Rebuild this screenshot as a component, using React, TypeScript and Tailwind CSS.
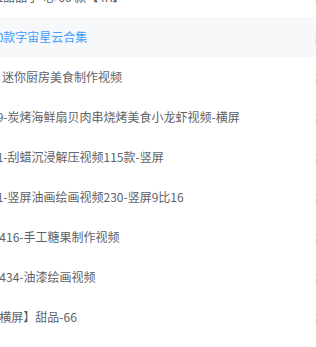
const ROWS = [
  { name: "11甜品子-心 66 款【4K】", date: "2023-05-12" },
  { name: "10款字宙星云合集", date: "2023-05-12", active: true },
  { name: "1  迷你厨房美食制作视频", date: "2023-05-11" },
  { name: "19-炭烤海鲜扇贝肉串烧烤美食小龙虾视频-横屏", date: "2023-05-11" },
  { name: "11-刮蜡沉浸解压视频115款-竖屏", date: "2023-05-10" },
  { name: "11-竖屏油画绘画视频230-竖屏9比16", date: "2023-05-10" },
  { name: "1 416-手工糖果制作视频", date: "2023-05-09" },
  { name: "1 434-油漆绘画视频", date: "2023-05-09" },
  { name: "1 横屏】甜品-66", date: "2023-05-08" },
  { name: "1 竖屏】甜品-52", date: "2023-05-08" },
];

export default function App() {
  return (
    <div className="w-[316px] h-[347px] overflow-hidden bg-white font-['Noto_Sans_CJK_SC',sans-serif] text-[12px]">
      <div className="-mt-[23px] flex flex-col">
        {ROWS.map((row, i) => (
          <div
            key={i}
            className={`h-[40px] flex items-center shrink-0 ${row.active ? "bg-[#f7f8fa]" : "bg-white"}`}
          >
            <div className="-ml-[10px] flex items-center">
              <span
                className={`w-[325px] shrink-0 whitespace-pre overflow-hidden ${row.active ? "text-[#409eff]" : "text-[#606266]"}`}
              >
                {row.name}
              </span>
              <span className="whitespace-nowrap text-[#606266]">{row.date}</span>
            </div>
          </div>
        ))}
      </div>
    </div>
  );
}
